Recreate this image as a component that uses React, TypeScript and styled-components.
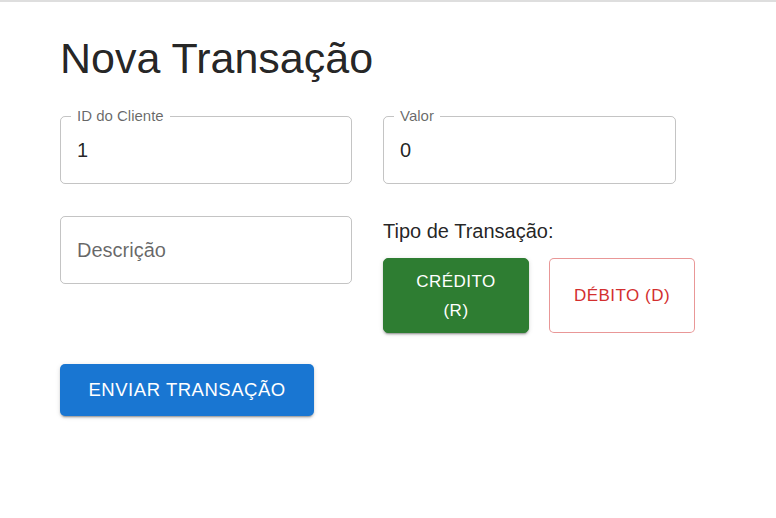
import React from 'react';
import styled, { createGlobalStyle } from 'styled-components';

const GlobalStyle = createGlobalStyle`
    html, body {
        margin: 0;
        padding: 0;
        background: #fff;
    }
    body {
        font-family: "Liberation Sans", Arial, Helvetica, sans-serif;
        color: rgba(0, 0, 0, 0.87);
    }
`;

const Frame = styled.div`
    min-height: 516px;
    border-top: 2px solid #dedede;
    padding: 30px 0 0 60px;
    box-sizing: border-box;
`;

const Title = styled.h1`
    margin: 0 0 31px;
    font-size: 43px;
    line-height: 53px;
    font-weight: 400;
    color: rgba(0, 0, 0, 0.87);
`;

const FormGrid = styled.div`
    display: grid;
    grid-template-columns: 292px 293px;
    column-gap: 31px;
    row-gap: 32px;
    align-items: start;
`;

const Field = styled.div`
    position: relative;
    height: 68px;
    box-sizing: border-box;
    border: 1px solid rgba(0, 0, 0, 0.23);
    border-radius: 5px;
    display: flex;
    align-items: center;
    padding: 0 16px;
`;

const FloatLabel = styled.span`
    position: absolute;
    top: -10px;
    left: 10px;
    padding: 0 6px;
    background: #fff;
    font-size: 15px;
    line-height: 18px;
    color: rgba(0, 0, 0, 0.6);
`;

const FieldText = styled.span<{ $placeholder?: boolean }>`
    font-size: 20px;
    line-height: 24px;
    color: ${p => (p.$placeholder ? 'rgba(0, 0, 0, 0.6)' : 'rgba(0, 0, 0, 0.87)')};
`;

const TypeBlock = styled.div`
    display: flex;
    flex-direction: column;
    gap: 12px;
`;

const TypeLabel = styled.div`
    font-size: 20px;
    line-height: 30px;
`;

const ButtonRow = styled.div`
    display: flex;
    gap: 20px;
`;

const TypeButton = styled.button<{ $active?: boolean }>`
    flex: 0 0 146px;
    width: 146px;
    box-sizing: border-box;
    padding: 7.5px 19px;
    font-family: "Liberation Sans", Arial, Helvetica, sans-serif;
    font-size: 17px;
    line-height: 29px;
    font-weight: 400;
    letter-spacing: 0.02857em;
    text-transform: uppercase;
    border-radius: 5px;
    cursor: pointer;
    ${p => p.$active
        ? `
        background: #2e7d32;
        color: #fff;
        border: 1px solid #2e7d32;
        box-shadow: 0px 3px 1px -2px rgba(0,0,0,0.2), 0px 2px 2px 0px rgba(0,0,0,0.14), 0px 1px 5px 0px rgba(0,0,0,0.12);
        `
        : `
        background: #fff;
        color: #d32f2f;
        border: 1px solid rgba(211, 47, 47, 0.5);
        `}
`;

const SubmitButton = styled.button`
    justify-self: start;
    height: 52px;
    padding: 0 28.5px;
    border: none;
    border-radius: 5px;
    background: #1976d2;
    color: #fff;
    font-family: "Liberation Sans", Arial, Helvetica, sans-serif;
    font-size: 18.5px;
    font-weight: 400;
    letter-spacing: 0.02857em;
    text-transform: uppercase;
    cursor: pointer;
    margin-top: -1px;
    box-shadow: 0px 3px 1px -2px rgba(0,0,0,0.2), 0px 2px 2px 0px rgba(0,0,0,0.14), 0px 1px 5px 0px rgba(0,0,0,0.12);
`;

export default function App() {
    return (
        <>
            <GlobalStyle />
            <Frame>
                <Title>Nova Transação</Title>
                <FormGrid>
                    <Field>
                        <FloatLabel>ID do Cliente</FloatLabel>
                        <FieldText>1</FieldText>
                    </Field>
                    <Field>
                        <FloatLabel>Valor</FloatLabel>
                        <FieldText>0</FieldText>
                    </Field>
                    <Field>
                        <FieldText $placeholder>Descrição</FieldText>
                    </Field>
                    <TypeBlock>
                        <TypeLabel>Tipo de Transação:</TypeLabel>
                        <ButtonRow>
                            <TypeButton $active>Crédito (R)</TypeButton>
                            <TypeButton>Débito (D)</TypeButton>
                        </ButtonRow>
                    </TypeBlock>
                    <SubmitButton>Enviar Transação</SubmitButton>
                </FormGrid>
            </Frame>
        </>
    );
}
